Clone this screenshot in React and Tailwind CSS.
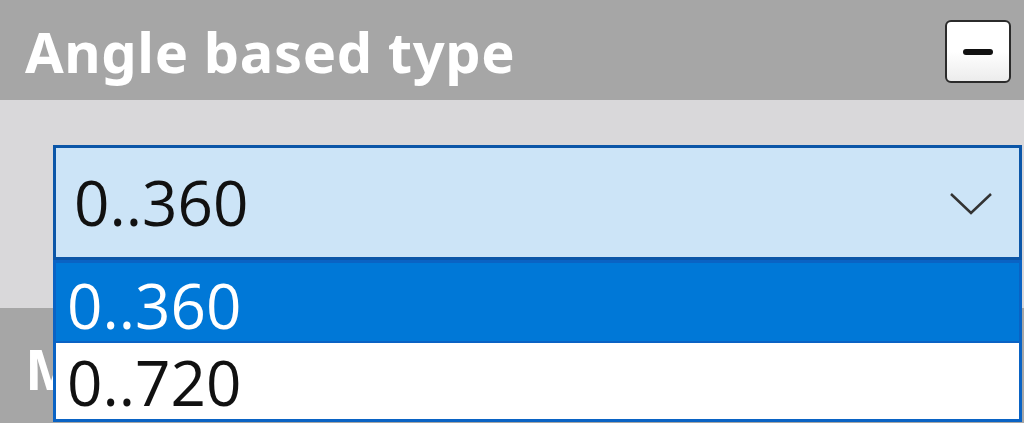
import React from "react";

export default function App() {
  return (
    <div className="relative w-[1024px] h-[423px] overflow-hidden bg-[#d9d8da] font-['Noto_Sans',sans-serif]">
      {/* Header */}
      <div className="h-[100px] bg-[#a6a6a6] flex items-center justify-between pl-[25px] pr-[13px]">
        <span className="text-white font-bold text-[56px] leading-none tracking-[0.6px] mt-[1px]">
          Angle based type
        </span>
        <button className="w-[66px] h-[63px] mt-[3px] rounded-[6px] border-2 border-[#2b2b2b] bg-gradient-to-b from-white via-white to-[#ececec] flex items-center justify-center">
          <span className="block w-[30px] h-[6px] bg-[#111] rounded-full" />
        </button>
      </div>

      {/* Content */}
      <div className="h-[208px] pt-[45px] pl-[53px] pr-[2px]">
        <div className="relative h-[115px] bg-[#cce4f7] border-[3px] border-[#0b56a8] flex items-center justify-between pl-[18px] pr-[24px]">
          <span className="font-['Open_Sans',sans-serif] text-[62px] leading-none text-[#111] -mt-[2px]">
            0..360
          </span>
          <svg width="48" height="30" viewBox="0 0 48 30" className="mt-[2px]">
            <path d="M4 5 L24 24 L44 5" fill="none" stroke="#333" strokeWidth="2.5" />
          </svg>

          {/* Dropdown list */}
          <div className="absolute left-[-3px] right-[-3px] top-[112px] border-[3px] border-[#0a63c4] bg-white">
            <div className="h-[78px] bg-[#0078d7] flex items-center pl-[11px]">
              <span className="font-['Open_Sans',sans-serif] text-[62px] leading-[62px] text-white mt-[6px]">
                0..360
              </span>
            </div>
            <div className="h-[78px] bg-white flex items-center pl-[11px] border-t-[2px] border-[#0a63c4]">
              <span className="font-['Open_Sans',sans-serif] text-[62px] leading-[62px] text-[#111] mt-[2px]">
                0..720
              </span>
            </div>
          </div>
        </div>
      </div>

      {/* Next section header (partially covered by the open list) */}
      <div className="h-[120px] bg-[#a6a6a6] flex items-start pl-[25px] pt-[32px]">
        <span className="text-white font-bold text-[56px] leading-none">M</span>
      </div>
    </div>
  );
}
